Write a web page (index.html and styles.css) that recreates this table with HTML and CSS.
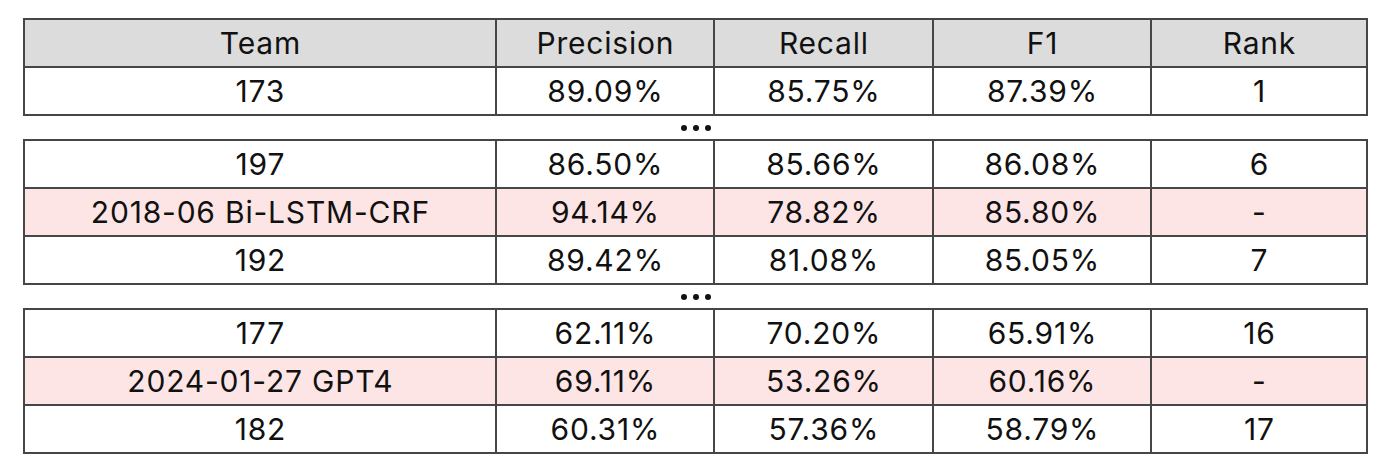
FILE: index.html
```html
<!DOCTYPE html>
<html lang="en">
<head>
<meta charset="utf-8">
<title>Results</title>
<link rel="stylesheet" href="styles.css">
</head>
<body>
<div class="board">
  <div class="block">
    <div class="row head">
      <div class="cell">Team</div><div class="cell">Precision</div><div class="cell">Recall</div><div class="cell">F1</div><div class="cell">Rank</div>
    </div>
    <div class="row">
      <div class="cell">173</div><div class="cell">89.09%</div><div class="cell">85.75%</div><div class="cell">87.39%</div><div class="cell">1</div>
    </div>
  </div>
  <div class="gap"><span class="dot"></span><span class="dot"></span><span class="dot"></span></div>
  <div class="block">
    <div class="row">
      <div class="cell">197</div><div class="cell">86.50%</div><div class="cell">85.66%</div><div class="cell">86.08%</div><div class="cell">6</div>
    </div>
    <div class="row hl">
      <div class="cell">2018-06 Bi-LSTM-CRF</div><div class="cell">94.14%</div><div class="cell">78.82%</div><div class="cell">85.80%</div><div class="cell">-</div>
    </div>
    <div class="row">
      <div class="cell">192</div><div class="cell">89.42%</div><div class="cell">81.08%</div><div class="cell">85.05%</div><div class="cell">7</div>
    </div>
  </div>
  <div class="gap"><span class="dot"></span><span class="dot"></span><span class="dot"></span></div>
  <div class="block">
    <div class="row">
      <div class="cell">177</div><div class="cell">62.11%</div><div class="cell">70.20%</div><div class="cell">65.91%</div><div class="cell">16</div>
    </div>
    <div class="row hl">
      <div class="cell">2024-01-27 GPT4</div><div class="cell">69.11%</div><div class="cell">53.26%</div><div class="cell">60.16%</div><div class="cell">-</div>
    </div>
    <div class="row">
      <div class="cell">182</div><div class="cell">60.31%</div><div class="cell">57.36%</div><div class="cell">58.79%</div><div class="cell">17</div>
    </div>
  </div>
</div>
</body>
</html>
```
FILE: styles.css
```css
html, body {
  margin: 0;
  padding: 0;
  background: #ffffff;
}
body {
  font-family: "Inter", "Liberation Sans", sans-serif;
  color: #111111;
}
.board {
  width: 1345px;
  margin: 18px 0 0 23px;
  display: flex;
  flex-direction: column;
}
.block {
  border: 2px solid #464646;
  display: flex;
  flex-direction: column;
}
.row {
  display: grid;
  grid-template-columns: 470px 218px 219px 218px 1fr;
  height: 46px;
  background: #ffffff;
}
.row + .row {
  border-top: 2px solid #464646;
}
.row.head {
  background: #dcdcdc;
}
.row.hl {
  background: #fde5e5;
}
.cell {
  display: flex;
  align-items: center;
  justify-content: center;
  font-size: 30px;
  letter-spacing: 0.8px;
  line-height: 1;
  padding-left: 0.8px;
}
.cell + .cell {
  border-left: 2px solid #464646;
}
.gap {
  height: 23px;
  display: flex;
  align-items: center;
  justify-content: center;
  gap: 6px;
}
.dot {
  width: 6px;
  height: 6px;
  border-radius: 50%;
  background: #111111;
}
```
